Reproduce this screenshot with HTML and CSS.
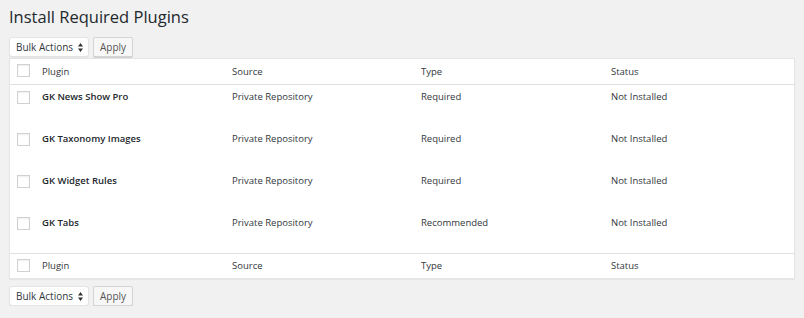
FILE: index.html
```html
<!DOCTYPE html>
<html lang="en">
<head>
<meta charset="utf-8">
<title>Install Required Plugins</title>
<link rel="stylesheet" href="styles.css">
</head>
<body>
<div class="wrap">
  <h1 class="page-title">Install Required Plugins</h1>

  <div class="tablenav top">
    <div class="select-wrap">
      <select class="bulk-select"><option>Bulk Actions</option></select>
      <svg class="select-arrow" width="5" height="9" viewBox="0 0 5 9"><path d="M0 3.5 L2.5 0 L5 3.5 Z M0 5.5 L2.5 9 L5 5.5 Z" fill="#333"/></svg>
    </div>
    <button class="button">Apply</button>
  </div>

  <table class="plugins">
    <colgroup>
      <col class="c-check">
      <col class="c-plugin"><col class="c-source"><col class="c-type"><col>
    </colgroup>
    <thead>
      <tr>
        <th class="check"><span class="cb"></span></th>
        <th>Plugin</th><th>Source</th><th>Type</th><th>Status</th>
      </tr>
    </thead>
    <tbody>
      <tr>
        <td class="check"><span class="cb"></span></td>
        <td><strong>GK News Show Pro</strong></td>
        <td>Private Repository</td><td>Required</td><td>Not Installed</td>
      </tr>
      <tr>
        <td class="check"><span class="cb"></span></td>
        <td><strong>GK Taxonomy Images</strong></td>
        <td>Private Repository</td><td>Required</td><td>Not Installed</td>
      </tr>
      <tr>
        <td class="check"><span class="cb"></span></td>
        <td><strong>GK Widget Rules</strong></td>
        <td>Private Repository</td><td>Required</td><td>Not Installed</td>
      </tr>
      <tr>
        <td class="check"><span class="cb"></span></td>
        <td><strong>GK Tabs</strong></td>
        <td>Private Repository</td><td>Recommended</td><td>Not Installed</td>
      </tr>
    </tbody>
    <tfoot>
      <tr>
        <th class="check"><span class="cb"></span></th>
        <th>Plugin</th><th>Source</th><th>Type</th><th>Status</th>
      </tr>
    </tfoot>
  </table>

  <div class="tablenav bottom">
    <div class="select-wrap">
      <select class="bulk-select"><option>Bulk Actions</option></select>
      <svg class="select-arrow" width="5" height="9" viewBox="0 0 5 9"><path d="M0 3.5 L2.5 0 L5 3.5 Z M0 5.5 L2.5 9 L5 5.5 Z" fill="#333"/></svg>
    </div>
    <button class="button">Apply</button>
  </div>
</div>
</body>
</html>
```

FILE: styles.css
```css
html, body {
  margin: 0;
  padding: 0;
  background: #f1f1f1;
}
body {
  font-family: "Open Sans", "Liberation Sans", sans-serif;
  color: #32373c;
  font-size: 9.5px;
}
.wrap {
  padding: 0 9px;
}
.page-title {
  margin: 0;
  padding-top: 6px;
  font-size: 16.5px;
  line-height: 22px;
  font-weight: 400;
  color: #23282d;
}
.tablenav {
  display: flex;
  gap: 4px;
  height: 20px;
}
.tablenav.top {
  margin: 9px 0 1px;
}
.tablenav.bottom {
  margin: 7px 0 0;
}
.select-wrap {
  position: relative;
  display: flex;
}
.bulk-select {
  -webkit-appearance: none;
  appearance: none;
  width: 80px;
  height: 20px;
  margin: 0;
  padding: 0 0 0 6px;
  border: 1px solid #e4e4e4;
  border-radius: 3px;
  background: #fff;
  box-shadow: 0 1px 1px rgba(0, 0, 0, 0.05);
  font-family: "Open Sans", "Liberation Sans", sans-serif;
  font-size: 10px;
  color: #32373c;
}
.select-arrow {
  position: absolute;
  right: 6px;
  top: 6px;
  pointer-events: none;
}
.button {
  height: 20px;
  width: 40px;
  margin: 0;
  padding: 0;
  border: 1px solid #d4d4d4;
  border-radius: 2px;
  background: #f7f7f7;
  box-shadow: 0 1px 0 #d0d0d0;
  font-family: "Open Sans", "Liberation Sans", sans-serif;
  font-size: 10px;
  color: #555;
}
.plugins {
  width: 786px;
  table-layout: fixed;
  border-collapse: separate;
  border-spacing: 0;
  border: 1px solid #e5e5e5;
  background: #fff;
  box-shadow: 0 1px 1px rgba(0, 0, 0, 0.04);
}
.c-check {
  width: 22px;
}
.c-plugin {
  width: 190px;
}
.c-source {
  width: 189px;
}
.c-type {
  width: 190px;
}
.plugins th,
.plugins td {
  text-align: left;
  vertical-align: top;
  font-weight: 400;
  line-height: 15px;
  padding: 4px 10px 23px;
}
.plugins thead th {
  padding: 5px 10px;
  border-bottom: 1px solid #e1e1e1;
}
.plugins tfoot th {
  padding: 4px 10px 5px;
  border-top: 1px solid #e1e1e1;
}
.plugins .check {
  padding-left: 7px;
  padding-right: 0;
}
.plugins td.check {
  padding-top: 6px;
}
.plugins thead .check {
  padding-top: 5px;
}
.plugins tfoot .check {
  padding-top: 5px;
}
.cb {
  display: block;
  width: 13px;
  height: 13px;
  box-sizing: border-box;
  border: 1px solid #cfd1d3;
  background: #fff;
  box-shadow: inset 0 1px 2px rgba(0, 0, 0, 0.07);
}
.plugins strong {
  font-weight: 600;
  color: #23282d;
}
```
